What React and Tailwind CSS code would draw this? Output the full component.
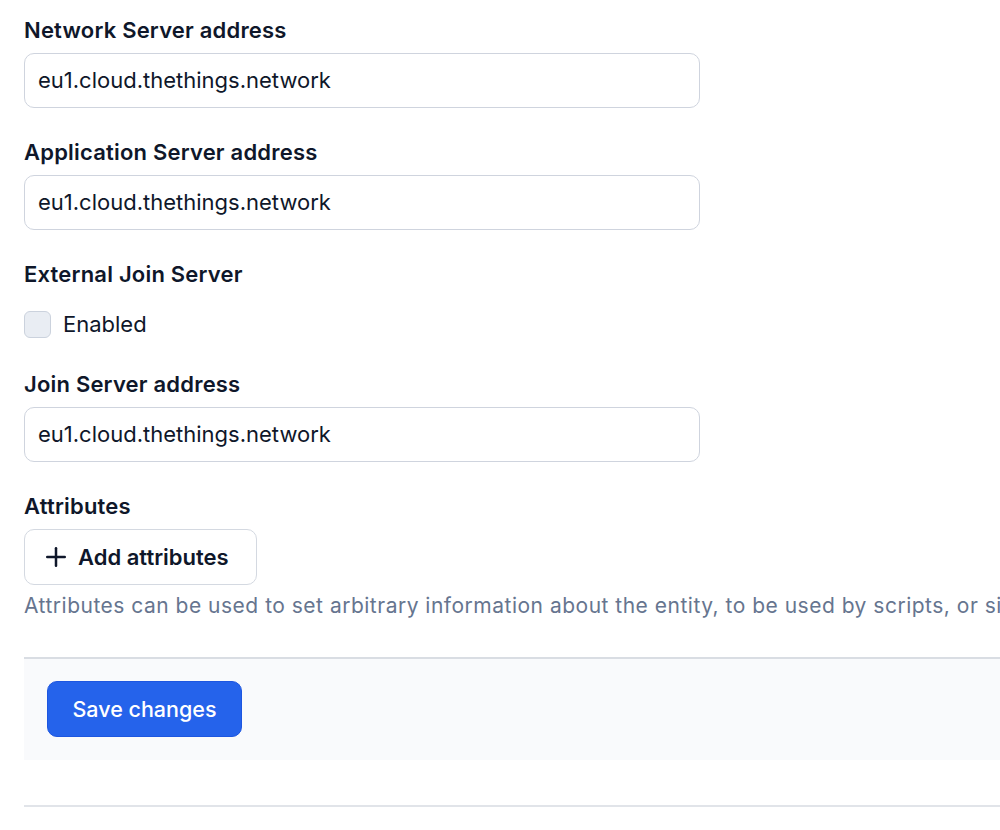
import { Plus } from 'lucide-react';

function Field({ label, value, className = '' }) {
  return (
    <div className={className}>
      <label className="block text-[22px] leading-[28px] font-semibold tracking-[0.2px] text-[#0f172a] mb-[9px]">{label}</label>
      <div className="w-[676px] h-[55px] border border-[#cfd4de] rounded-[10px] bg-white flex items-center px-[13px] text-[22px] text-[#0f172a]">
        {value}
      </div>
    </div>
  );
}

export default function App() {
  return (
    <div className="min-h-screen bg-white overflow-hidden" style={{ fontFamily: 'Inter, "Noto Sans", sans-serif' }}>
      <div className="pl-[24px] pt-[16px]">
        <Field label="Network Server address" value="eu1.cloud.thethings.network" />
        <Field label="Application Server address" value="eu1.cloud.thethings.network" className="mt-[30px]" />

        <div className="mt-[30px]">
          <p className="text-[22px] leading-[28px] font-semibold tracking-[0.2px] text-[#0f172a]">External Join Server</p>
          <label className="mt-[22px] flex items-center gap-[12px] h-[28px]">
            <span className="w-[27px] h-[27px] rounded-[6px] border border-[#cbd2dd] bg-[#e9edf3]" />
            <span className="text-[22px] text-[#0f172a]">Enabled</span>
          </label>
        </div>

        <Field label="Join Server address" value="eu1.cloud.thethings.network" className="mt-[32px]" />

        <div className="mt-[30px]">
          <p className="text-[22px] leading-[28px] font-semibold tracking-[0.2px] text-[#0f172a] mb-[9px]">Attributes</p>
          <button className="h-[56px] w-[233px] border border-[#d4d9e1] rounded-[10px] bg-white flex items-center pl-[16px] gap-[7px] text-[22px] font-semibold text-[#0f172a]">
            <Plus className="w-[30px] h-[30px] shrink-0" strokeWidth={2} />
            Add attributes
          </button>
          <p className="mt-[7px] text-[21px] leading-[28px] tracking-[0.5px] text-[#66758f] whitespace-nowrap">
            Attributes can be used to set arbitrary information about the entity, to be used by scripts, or simply for your own organization.
          </p>
        </div>

        <div className="mt-[37px] border-t-2 border-[#d9dde3] bg-[#f9fafc] pt-[22px] pb-[23px] pl-[23px]">
          <button className="h-[56px] w-[195px] rounded-[10px] bg-[#2563eb] border border-[#1d56e0] text-white text-[21.5px] font-medium">
            Save changes
          </button>
        </div>

        <div className="mt-[45px] border-t-2 border-[#e1e4e9]" />
      </div>
    </div>
  );
}
